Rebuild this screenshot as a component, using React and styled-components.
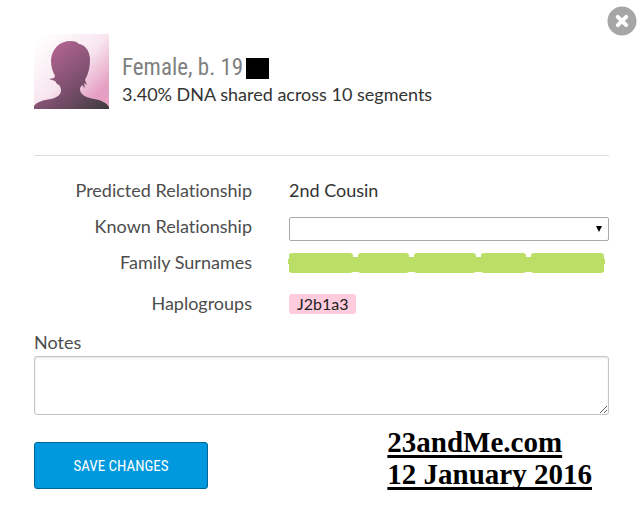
import React from 'react';
import styled, { createGlobalStyle } from 'styled-components';

const GlobalStyle = createGlobalStyle`
  * { box-sizing: border-box; }
  body {
    margin: 0;
    background: #fff;
    color: #333;
    font-family: Lato, "Liberation Sans", sans-serif;
    font-size: 18px;
    line-height: 24px;
    font-variant-ligatures: none;
  }
`;

const condensed = `"Roboto Condensed", "Open Sans Condensed", "Liberation Sans", sans-serif`;

const Dialog = styled.main`
  position: relative;
  padding: 34px 33px 16px 34px;
`;

const CloseButton = styled.button`
  position: absolute;
  top: 6px;
  right: 5px;
  width: 30px;
  height: 30px;
  padding: 0;
  border: 0;
  border-radius: 50%;
  background: none;
  cursor: pointer;

  svg { display: block; }
`;

const Header = styled.header`
  display: flex;
  gap: 13px;
  height: 122px;
  border-bottom: 1px solid #ddd;
`;

const Avatar = styled.svg`
  flex: none;
  width: 75px;
  height: 75px;
`;

const Identity = styled.div`
  padding-top: 20px;
`;

const Name = styled.h1`
  display: flex;
  align-items: center;
  margin: 0;
  color: #808080;
  font: 400 23px/28px ${condensed};
`;

const Redaction = styled.span`
  width: 23px;
  height: 21px;
  margin-left: 3px;
  background: #000;
`;

const Shared = styled.p`
  margin: 0;
`;

const Form = styled.form`
  display: flex;
  flex-direction: column;
  padding-top: 22px;
`;

const Fields = styled.div`
  display: grid;
  grid-template-columns: 218px 1fr;
  column-gap: 37px;
  grid-template-rows: 36px 36px 41px 39px;
`;

const labelText = `
  color: #4d4d4d;
  font-size: 18px;
  line-height: 24px;
`;

const FieldLabel = styled.label`
  ${labelText}
  text-align: right;
`;

const Value = styled.output`
  display: block;
`;

const Select = styled.select`
  width: 100%;
  height: 24px;
  margin-top: 3px;
  padding: 0 20px 0 6px;
  appearance: none;
  border: 1px solid #a9a9a9;
  border-radius: 2px;
  background: #fff;
  font: inherit;
`;

const SelectBox = styled.div`
  position: relative;

  svg {
    position: absolute;
    top: 12px;
    right: 7px;
    pointer-events: none;
  }
`;

const Surnames = styled.div`
  position: relative;
  display: flex;
  gap: 5px;
  height: 20px;
  margin: 3px 5px 0 0;

  &::before {
    content: "";
    position: absolute;
    inset: 4px 0 1px;
    background: #bbde66;
  }

  &::after {
    content: "";
    position: absolute;
    inset: 6px -1px 9px;
    background: #bbde66;
  }
`;

const Surname = styled.span`
  flex: ${({ $weight }) => $weight} 1 0;
  border-radius: 3px;
  background: #bbde66;
`;

const Haplogroup = styled.span`
  display: inline-block;
  height: 20px;
  margin-top: 3px;
  padding: 0 7px 0 8px;
  border-radius: 3px;
  background: #ffccdd;
  color: #222;
  font-size: 16px;
  line-height: 20px;
  vertical-align: top;
`;

const NotesLabel = styled.label`
  ${labelText}
`;

const Notes = styled.textarea`
  display: block;
  width: 100%;
  height: 59px;
  margin-top: 2px;
  padding: 6px;
  border: 1px solid #c4c4c4;
  border-radius: 3px;
  box-shadow: inset 0 1px 2px #e4e4e4;
  font: inherit;
  resize: vertical;
`;

const Footer = styled.footer`
  display: flex;
  justify-content: space-between;
  align-items: flex-start;
  padding-top: 11px;
`;

const SaveButton = styled.button`
  width: 174px;
  height: 47px;
  margin-top: 16px;
  border: 1px solid #006699;
  border-radius: 3px;
  background: #0099dd;
  color: #fff;
  font: 400 15px/24px ${condensed};
  text-transform: uppercase;
  cursor: pointer;
`;

const Source = styled.p`
  margin: 0 17px 0 0;
  color: #000;
  font: 700 29px/32px "Liberation Serif", serif;
  text-decoration: underline;
  text-decoration-thickness: 3px;
  text-underline-offset: 3px;
  text-decoration-skip-ink: none;
`;

const surnameWeights = [64, 52, 62, 45, 74];

export default function App() {
  return (
    <>
      <GlobalStyle />
      <Dialog>
        <CloseButton type="button" aria-label="Close">
          <svg width="30" height="30" viewBox="0 0 30 30">
            <circle cx="15" cy="15" r="14.5" fill="#a6a6a6" />
            <path d="M10.8 10.8l8.4 8.4m0-8.4l-8.4 8.4" stroke="#fff" strokeWidth="4" strokeLinecap="round" />
          </svg>
        </CloseButton>
        <Header>
          <Avatar viewBox="0 0 75 75" aria-hidden="true">
            <defs>
              <linearGradient id="backdrop" x1="0" y1="0" x2="1" y2="1">
                <stop offset="0.05" stopColor="#fff" />
                <stop offset="0.5" stopColor="#f8e6ef" />
                <stop offset="0.82" stopColor="#e5a0c3" />
                <stop offset="1" stopColor="#e5a0c3" />
              </linearGradient>
              <linearGradient id="figure" gradientUnits="userSpaceOnUse" x1="17" y1="15" x2="68" y2="78">
                <stop offset="0" stopColor="#b0648f" />
                <stop offset="0.5" stopColor="#7e5070" />
                <stop offset="1" stopColor="#403c3e" />
              </linearGradient>
            </defs>
            <rect width="75" height="75" fill="url(#backdrop)" />
            <path
              fill="url(#figure)"
              d="M0 75V72C3 68 9 66 17 65C25 63 27 60 27 56C27 54 26 52 25 51L23 50L21 47L18 46L15 45L20 44L21 42C18 37 17 31 17 26C18 15 25 7 37 7C41 7 43 8 45 10C51 11 55 16 56 24C56 32 55 39 51 46L53 51L50 49L51 54L48 51L46 54C46 56 46 58 48 60C51 63 55 64 60 65C67 66 73 69 75 73V75Z"
            />
          </Avatar>
          <Identity>
            <Name>Female, b. 19<Redaction /></Name>
            <Shared>3.40% DNA shared across 10 segments</Shared>
          </Identity>
        </Header>
        <Form onSubmit={(event) => event.preventDefault()}>
          <Fields>
            <FieldLabel htmlFor="predicted">Predicted Relationship</FieldLabel>
            <Value id="predicted">2nd Cousin</Value>
            <FieldLabel htmlFor="known">Known Relationship</FieldLabel>
            <SelectBox>
              <Select id="known" defaultValue="">
                <option value="" />
              </Select>
              <svg width="6" height="6" viewBox="0 0 6 6" aria-hidden="true">
                <path d="M0 0h6L3 6z" fill="#000" />
              </svg>
            </SelectBox>
            <FieldLabel as="span">Family Surnames</FieldLabel>
            <Surnames>
              {surnameWeights.map((weight) => <Surname key={weight} $weight={weight} />)}
            </Surnames>
            <FieldLabel as="span">Haplogroups</FieldLabel>
            <div><Haplogroup>J2b1a3</Haplogroup></div>
          </Fields>
          <NotesLabel htmlFor="notes">Notes</NotesLabel>
          <Notes id="notes" />
          <Footer>
            <SaveButton type="submit">Save changes</SaveButton>
            <Source>23andMe.com<br />12 January 2016</Source>
          </Footer>
        </Form>
      </Dialog>
    </>
  );
}
